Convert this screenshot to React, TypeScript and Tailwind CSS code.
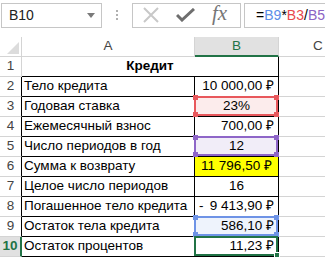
const rows: { n: number; a: string; b: string; align: 'left' | 'center' | 'right' | 'acct'; mark?: 'red' | 'purple' | 'yellow' | 'blue' | 'green' }[] = [
  { n: 2, a: 'Тело кредита', b: '10 000,00 ₽', align: 'right' },
  { n: 3, a: 'Годовая ставка', b: '23%', align: 'center', mark: 'red' },
  { n: 4, a: 'Ежемесячный взнос', b: '700,00 ₽', align: 'right' },
  { n: 5, a: 'Число периодов в год', b: '12', align: 'center', mark: 'purple' },
  { n: 6, a: 'Сумма к возврату', b: '11 796,50 ₽', align: 'center', mark: 'yellow' },
  { n: 7, a: 'Целое число периодов', b: '16', align: 'center' },
  { n: 8, a: 'Погашенное тело кредита', b: '9 413,90 ₽', align: 'acct' },
  { n: 9, a: 'Остаток тела кредита', b: '586,10 ₽', align: 'right', mark: 'blue' },
  { n: 10, a: 'Остаток процентов', b: '11,23 ₽', align: 'right', mark: 'green' },
];

function RefBox({ border, handle, fill }: { border: string; handle: string; fill: string }) {
  // colored reference frame with corner handles, drawn over the cell
  return (
    <div className={`absolute -left-px -top-px right-0 bottom-0 border-2 ${border} ${fill} pointer-events-none`}>
      <span className={`absolute -left-[3px] -top-[3px] w-[5px] h-[5px] ${handle}`} />
      <span className={`absolute -right-[3px] -top-[3px] w-[5px] h-[5px] ${handle}`} />
      <span className={`absolute -left-[3px] -bottom-[3px] w-[5px] h-[5px] ${handle}`} />
      <span className={`absolute -right-[3px] -bottom-[3px] w-[5px] h-[5px] ${handle}`} />
    </div>
  );
}

export default function App() {
  return (
    <div className="w-[325px] h-[259px] overflow-hidden bg-white text-[13.5px] text-black" style={{ fontFamily: '"Liberation Sans", Arial, sans-serif' }}>
      {/* formula bar */}
      <div className="flex items-center h-[37px] pt-[3px] pb-[10px] text-[14px]">
        <div className="ml-[1px] w-[102px] h-[25px] border border-[#c6c6c6] flex items-center justify-between pl-[7px] pr-[6px] text-[#222]">
          <span>B10</span>
          <svg width="8" height="5" viewBox="0 0 8 5"><path d="M0 0h8L4 5z" fill="#7a7a7a" /></svg>
        </div>
        <div className="w-[30px] flex flex-col items-center gap-[2px]">
          <span className="w-[2px] h-[2px] bg-[#b0b0b0]" />
          <span className="w-[2px] h-[2px] bg-[#b0b0b0]" />
          <span className="w-[2px] h-[2px] bg-[#b0b0b0]" />
        </div>
        <div className="w-[110px] h-[25px] border border-[#c6c6c6] flex items-center pl-[10px] gap-[17px]">
          <svg width="16" height="16" viewBox="0 0 16 16"><path d="M1 1L15 15M15 1L1 15" stroke="#c8c8c8" strokeWidth="2" /></svg>
          <svg width="19" height="14" viewBox="0 0 19 14"><path d="M1 7l5 5L18 1" stroke="#6e6e6e" strokeWidth="3" fill="none" /></svg>
          <span className="text-[#767676] italic text-[21px] leading-none -mt-[3px]" style={{ fontFamily: '"Liberation Serif", serif' }}>fx</span>
        </div>
        <div className="ml-[3px] flex-1 h-[25px] border border-r-0 border-[#c6c6c6] flex items-center pl-[11px]">
          <span>=</span>
          <span className="text-[#5b8de8]">B9</span>
          <span>*</span>
          <span className="text-[#e8484d]">B3</span>
          <span>/</span>
          <span className="text-[#8c63c4]">B5</span>
        </div>
      </div>

      {/* sheet */}
      <div className="grid grid-cols-[22px_173px_84px_1fr] grid-rows-[20px] auto-rows-[20px]">
        {/* header row */}
        <div className="relative border-r border-b border-[#d4d4d4] bg-white">
          <svg className="absolute right-[2px] bottom-[2px]" width="12" height="12" viewBox="0 0 12 12"><path d="M12 0V12H0z" fill="#dcdcdc" /></svg>
        </div>
        <div className="border-r border-b border-[#d4d4d4] flex items-center justify-center text-[#444]">A</div>
        <div className="border-r border-[#d4d4d4] border-b-2 border-b-[#217346] bg-[#e1e1e1] flex items-center justify-center text-[#217346]">B</div>
        <div className="border-b border-[#d4d4d4] flex items-center pl-[34px] text-[#444]">C</div>

        {/* row 1 */}
        <div className="border-r border-b border-[#d4d4d4] flex items-center justify-center text-[#444]">1</div>
        <div className="col-span-2 border-r border-b border-r-black border-b-black flex items-center justify-center font-bold">Кредит</div>
        <div className="border-b border-[#d4d4d4]" />

        {rows.map(r => (
          <div key={r.n} className="contents">
            <div
              className={`border-b border-[#d4d4d4] flex items-center justify-center ${
                r.mark === 'green' ? 'border-r-2 border-r-[#217346] bg-[#e1e1e1] text-[#217346] font-bold' : 'border-r border-r-black text-[#444]'
              }`}
            >
              {r.n}
            </div>
            <div className="border-r border-b border-black flex items-center pl-[2px] whitespace-nowrap">{r.a}</div>
            <div
              className={`relative border-r border-b border-black flex items-center px-[4px] whitespace-nowrap ${
                r.align === 'right' ? 'justify-end' : r.align === 'center' ? 'justify-center' : 'justify-between'
              } ${r.mark === 'yellow' ? 'bg-[#ffff00]' : ''}`}
            >
              {r.mark === 'red' && <RefBox border="border-[#e8585c]" handle="bg-[#e8585c]" fill="bg-[#fcecec]" />}
              {r.mark === 'purple' && <RefBox border="border-[#8e66c8]" handle="bg-[#8e66c8]" fill="bg-[#f1edf8]" />}
              {r.mark === 'blue' && <RefBox border="border-[#6e93e6]" handle="bg-[#6e93e6]" fill="bg-[#eef3fc]" />}
              {r.mark === 'green' && (
                <div className="absolute -left-px -top-px right-0 bottom-0 border-2 border-[#217346] pointer-events-none">
                  <span className="absolute -right-[4px] -bottom-[4px] w-[6px] h-[6px] bg-[#217346] border border-white" />
                </div>
              )}
              {r.align === 'acct' && <span className="relative">-</span>}
              <span className="relative">{r.b}</span>
            </div>
            <div className="border-b border-[#d4d4d4]" />
          </div>
        ))}
      </div>
    </div>
  );
}
